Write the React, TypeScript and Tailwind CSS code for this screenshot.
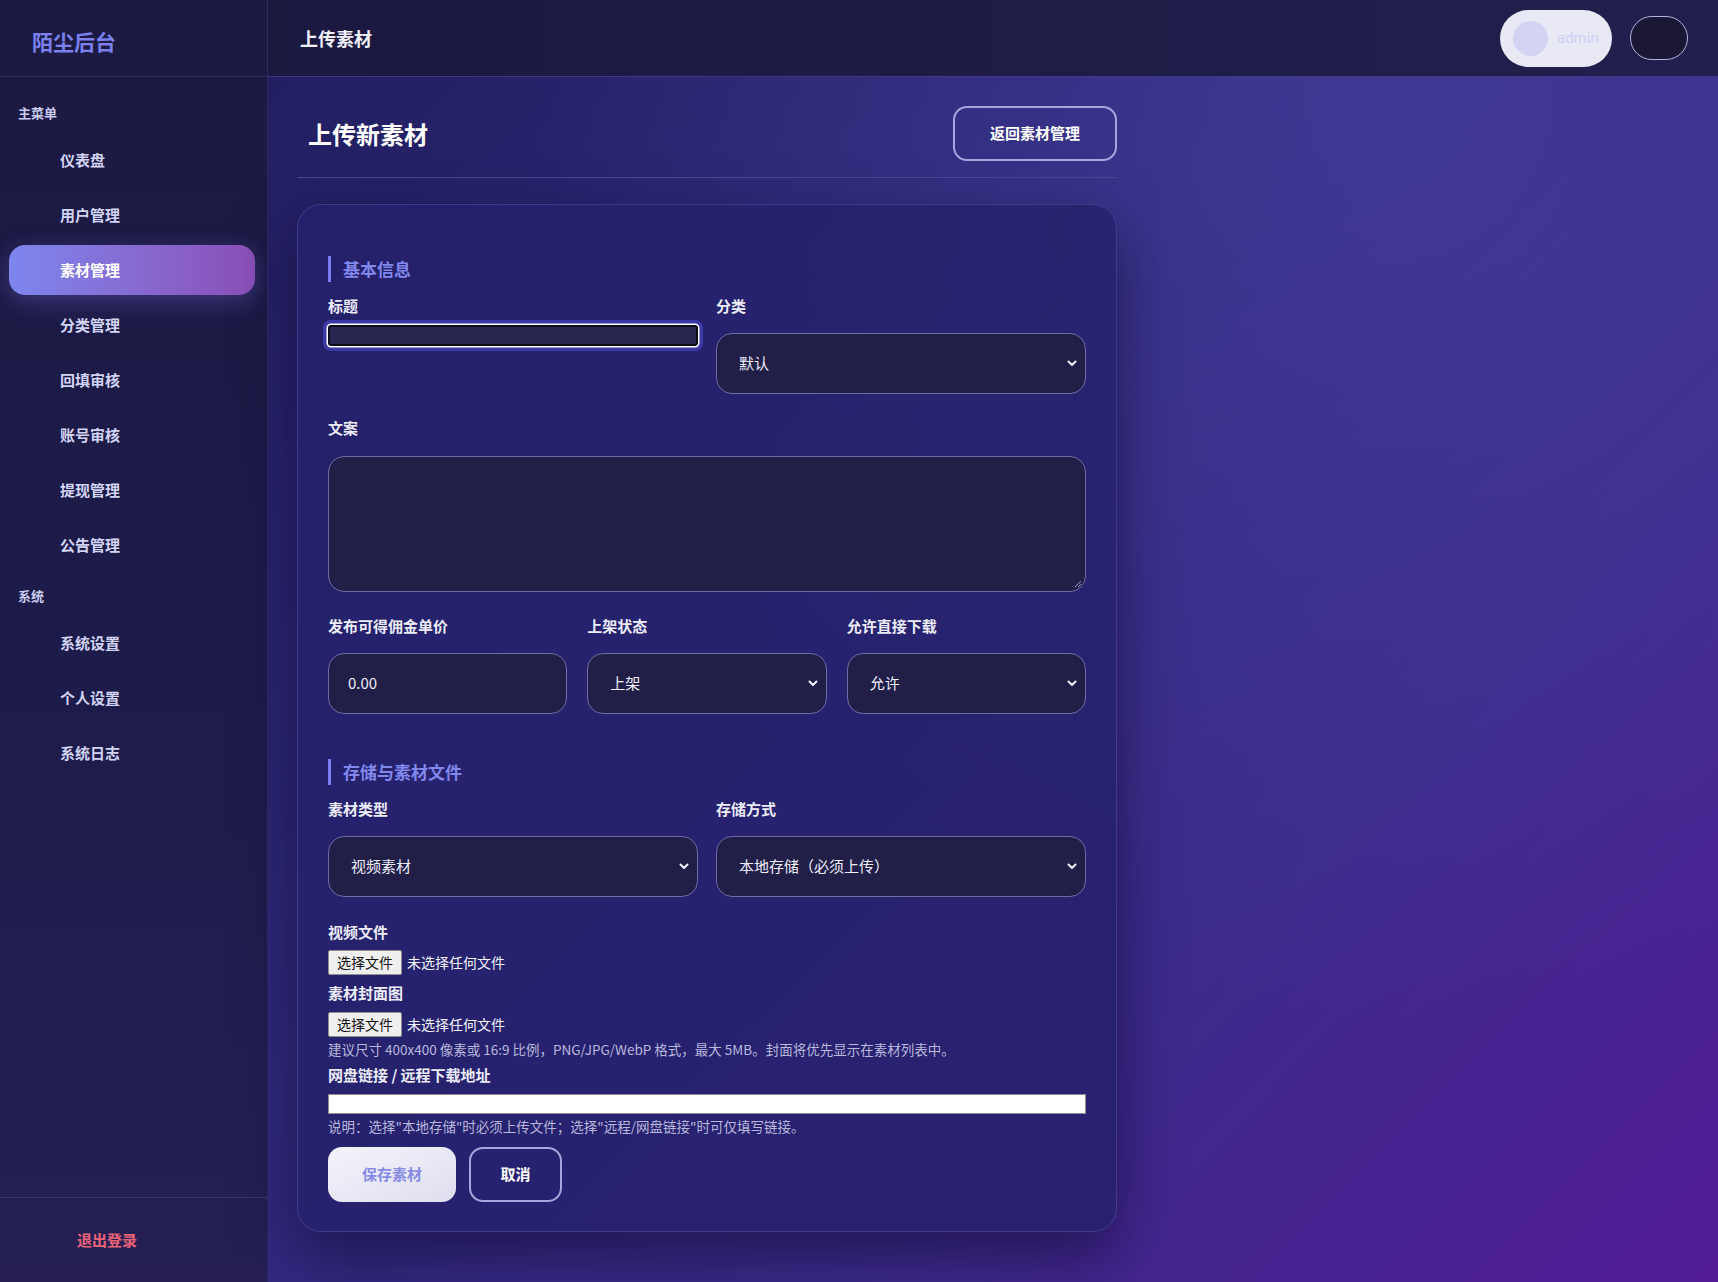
import React from 'react';

const menuMain = ['仪表盘', '用户管理', '素材管理', '分类管理', '回填审核', '账号审核', '提现管理', '公告管理'];
const menuSys = ['系统设置', '个人设置', '系统日志'];

function NavItem({ label, active }: { label: string; active?: boolean }) {
  return (
    <div
      className={
        'ml-[9px] mr-[12px] h-[50px] flex items-center pl-[51px] rounded-[16px] text-[15px] font-bold ' +
        (active
          ? 'bg-gradient-to-r from-[#7d86ee] to-[#8a4fb7] text-white shadow-[0_6px_22px_rgba(120,110,230,0.35)]'
          : 'text-[#d2d4f4]')
      }
    >
      {label}
    </div>
  );
}

function Chevron() {
  return (
    <svg width="10" height="7" viewBox="0 0 10 7" fill="none">
      <path d="M1.5 1.5 5 5l3.5-3.5" stroke="#f2f2fb" strokeWidth="2" strokeLinecap="round" strokeLinejoin="round" />
    </svg>
  );
}

function FakeSelect({ value, className = '' }: { value: string; className?: string }) {
  return (
    <div
      className={
        'h-[61px] flex items-center justify-between pl-[22px] pr-[8px] bg-[#211f48] border-[1.5px] border-[#6f6ba6] rounded-[16px] text-[15px] text-[#eeeefa] ' +
        className
      }
    >
      <span>{value}</span>
      <Chevron />
    </div>
  );
}

function Label({ children, className = '' }: { children: React.ReactNode; className?: string }) {
  return <div className={'h-[20px] leading-[20px] text-[15px] font-bold text-[#ececf8] ' + className}>{children}</div>;
}

function SectionTitle({ children, className = '' }: { children: React.ReactNode; className?: string }) {
  return (
    <div className={'h-[26px] flex items-center border-l-[3px] border-[#7a7ff0] pl-[12px] text-[17px] font-bold text-[#8287ee] ' + className}>
      {children}
    </div>
  );
}

function FileInput() {
  return (
    <div className="h-[25px] flex items-center text-[14px]">
      <span className="h-[25px] px-[8px] flex items-center bg-[#efefef] border border-[#8f8f8f] rounded-[2px] text-[#111]">选择文件</span>
      <span className="ml-[5px] text-[#f4f4fb]">未选择任何文件</span>
    </div>
  );
}

export default function App() {
  return (
    <div className="flex h-[1282px] w-full overflow-hidden font-['Noto_Sans_CJK_SC','Noto_Sans',sans-serif]">
      {/* sidebar */}
      <aside className="w-[268px] shrink-0 flex flex-col bg-gradient-to-b from-[#1c1a42] via-[#1d1b49] to-[#251f54] border-r border-[#2c2a62]">
        <div className="h-[77px] shrink-0 flex items-center pl-[32px] pt-[7px] border-b border-[#2d2a60] text-[21px] font-bold text-[#7b80ee]">
          陌尘后台
        </div>
        <nav className="flex-1 pt-[24px]">
          <div className="h-[24px] flex items-center pl-[18px] text-[13px] font-bold text-[#c9cbf0]">主菜单</div>
          <div className="mt-[10px] flex flex-col gap-[5px]">
            {menuMain.map((m) => (
              <NavItem key={m} label={m} active={m === '素材管理'} />
            ))}
          </div>
          <div className="mt-[14px] h-[24px] flex items-center pl-[18px] text-[13px] font-bold text-[#c9cbf0]">系统</div>
          <div className="mt-[10px] flex flex-col gap-[5px]">
            {menuSys.map((m) => (
              <NavItem key={m} label={m} />
            ))}
          </div>
        </nav>
        <div className="h-[85px] shrink-0 flex items-center pl-[77px] border-t border-[#3a366f] text-[15px] font-bold text-[#ea6479]">
          退出登录
        </div>
      </aside>

      {/* main */}
      <div className="flex-1 flex flex-col bg-[image:radial-gradient(ellipse_at_78%_8%,rgba(78,72,170,0.5),transparent_55%),linear-gradient(135deg,#211e5f_0%,#2f2a7c_40%,#3d2a8c_70%,#521c96_100%)]">
        <header className="h-[77px] shrink-0 flex items-center justify-between pl-[32px] pr-[30px] bg-gradient-to-r from-[#1b1940] to-[#221f4e] border-b border-[#3c3986]">
          <div className="text-[18px] font-bold text-[#f1f1fa]">上传素材</div>
          <div className="flex items-center gap-[18px]">
            <div className="w-[112px] h-[57px] rounded-full bg-[#e9e9f5] flex items-center pl-[13px] gap-[9px]">
              <div className="w-[35px] h-[35px] rounded-full bg-[#d3d4f3]" />
              <span className="text-[15px] text-[#cdd0f6] font-['Roboto',sans-serif]">admin</span>
            </div>
            <div className="w-[58px] h-[44px] rounded-full bg-[#1a1834] border border-[#b5b2de]" />
          </div>
        </header>

        <main className="px-[29px] pt-[29px]">
          <div className="w-[820px]">
            <div className="flex items-center justify-between pb-[16px] border-b border-[#4a4690]">
              <h1 className="pl-[11px] text-[24px] font-bold text-white">上传新素材</h1>
              <button className="w-[164px] h-[55px] rounded-[14px] border-2 border-[#a7a5dd] text-[15px] font-bold text-white">
                返回素材管理
              </button>
            </div>

            <div className="mt-[26px] rounded-[24px] border border-[#3e3b8c] bg-[#24216a]/80 shadow-[0_24px_60px_rgba(12,8,40,0.55)] px-[30px] pt-[30px] pb-[29px]">
              <SectionTitle className="mt-[21px]">基本信息</SectionTitle>

              <div className="mt-[14px] grid grid-cols-2 gap-x-[18px]">
                <div>
                  <Label>标题</Label>
                  <div className="mt-[9px] h-[21px] rounded-[3px] bg-[#272650] border-2 border-[#0d0c1c] shadow-[0_0_0_1.5px_#ffffff,0_0_0_5px_#3a39a6]" />
                </div>
                <div>
                  <Label>分类</Label>
                  <FakeSelect value="默认" className="mt-[17px]" />
                </div>
              </div>

              <Label className="mt-[24px]">文案</Label>
              <div className="relative mt-[18px] h-[136px] bg-[#211f48] border-[1.5px] border-[#6f6ba6] rounded-[16px]">
                <svg className="absolute right-[3px] bottom-[3px]" width="9" height="9" viewBox="0 0 9 9">
                  <path d="M8 2 2 8M8 5 5 8" stroke="#9c9ac4" strokeWidth="1" />
                </svg>
              </div>

              <div className="mt-[24px] grid grid-cols-3 gap-x-[20px]">
                <div>
                  <Label>发布可得佣金单价</Label>
                  <div className="mt-[17px] h-[61px] flex items-center pl-[19px] bg-[#211f48] border-[1.5px] border-[#6f6ba6] rounded-[16px] text-[15px] text-[#eeeefa]">
                    0.00
                  </div>
                </div>
                <div>
                  <Label>上架状态</Label>
                  <FakeSelect value="上架" className="mt-[17px]" />
                </div>
                <div>
                  <Label>允许直接下载</Label>
                  <FakeSelect value="允许" className="mt-[17px]" />
                </div>
              </div>

              <SectionTitle className="mt-[45px]">存储与素材文件</SectionTitle>

              <div className="mt-[14px] grid grid-cols-2 gap-x-[18px]">
                <div>
                  <Label>素材类型</Label>
                  <FakeSelect value="视频素材" className="mt-[17px]" />
                </div>
                <div>
                  <Label>存储方式</Label>
                  <FakeSelect value="本地存储（必须上传）" className="mt-[17px]" />
                </div>
              </div>

              <Label className="mt-[25px]">视频文件</Label>
              <div className="mt-[8px]">
                <FileInput />
              </div>
              <Label className="mt-[8px]">素材封面图</Label>
              <div className="mt-[9px]">
                <FileInput />
              </div>
              <p className="mt-[3px] h-[18px] leading-[18px] text-[13.5px] text-[#b9b8dc]">
                建议尺寸 400x400 像素或 16:9 比例，PNG/JPG/WebP 格式，最大 5MB。封面将优先显示在素材列表中。
              </p>
              <Label className="mt-[7px]">网盘链接 / 远程下载地址</Label>
              <div className="mt-[9px] h-[20px] bg-white border border-[#8d8d8d]" />
              <p className="mt-[3px] h-[18px] leading-[18px] text-[13.5px] text-[#b9b8dc]">
                说明：选择"本地存储"时必须上传文件；选择"远程/网盘链接"时可仅填写链接。
              </p>

              <div className="mt-[12px] flex gap-[13px]">
                <button className="w-[128px] h-[55px] rounded-[14px] bg-gradient-to-br from-[#f4f3fb] to-[#dfdeef] text-[15px] font-bold text-[#878be6]">
                  保存素材
                </button>
                <button className="w-[93px] h-[55px] rounded-[14px] border-2 border-[#a7a5dd] text-[15px] font-bold text-white">
                  取消
                </button>
              </div>
            </div>
          </div>
        </main>
      </div>
    </div>
  );
}
